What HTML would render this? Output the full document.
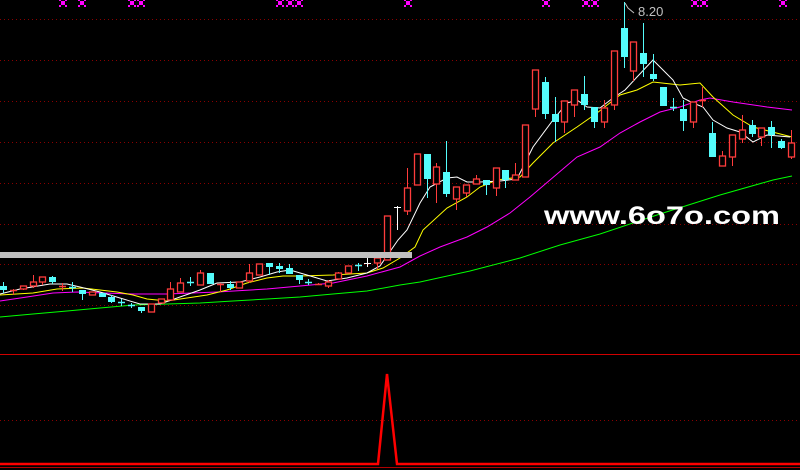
<!DOCTYPE html>
<html><head><meta charset="utf-8"><style>
html,body{margin:0;padding:0;background:#000;width:800px;height:470px;overflow:hidden}
svg{display:block}
</style></head><body>
<svg id="s" width="800" height="470" viewBox="0 0 800 470" xmlns="http://www.w3.org/2000/svg">
<rect width="800" height="470" fill="#000"/>
<g stroke="#8a0000" stroke-width="1" stroke-dasharray="1 3">
<line x1="0" y1="19.5" x2="800" y2="19.5"/>
<line x1="0" y1="60.5" x2="800" y2="60.5"/>
<line x1="0" y1="101.5" x2="800" y2="101.5"/>
<line x1="0" y1="142.5" x2="800" y2="142.5"/>
<line x1="0" y1="183.5" x2="800" y2="183.5"/>
<line x1="0" y1="224.5" x2="800" y2="224.5"/>
<line x1="0" y1="264.5" x2="800" y2="264.5"/>
<line x1="0" y1="305.5" x2="800" y2="305.5"/>
<line x1="0" y1="420.5" x2="800" y2="420.5"/>
</g>
<line x1="0" y1="354.5" x2="800" y2="354.5" stroke="#d00000"/>
<line x1="0" y1="467.5" x2="800" y2="467.5" stroke="#b00000"/>
<polyline points="0,464 378,464 387,374 397,464 800,464" fill="none" stroke="#ff0000" stroke-width="2.5"/>
<g id="lines" fill="none" stroke-width="1">
<polyline stroke="#00ff00" points="0,317 33,314 67,311 100,308 133,305 167,304 200,303 233,301 267,299 300,297 333,294 367,291 400,285 420,282 470,271 520,258 560,245 600,234 660,214 720,195 773,180 792,176"/>
<polyline stroke="#ff00ff" points="0,301 27,297 53,293 77,292 133,294 167,294 217,292 267,289 300,286 333,283 367,276 400,267 420,256 440,247 467,237 487,227 510,213 530,197 550,180 577,157 600,147 620,133 640,122 660,112 680,107 700,100 710,98 733,102 767,107 792,110"/>
<polyline stroke="#ffff00" points="0,295 33,293 57,289 83,288 117,292 133,295 147,299 167,301 187,298 207,295 227,290 247,283 267,278 283,276 300,276 333,275 367,273 383,268 400,258 415,247 423,230 447,208 467,197 480,187 497,180 520,177 533,163 553,143 577,127 597,113 620,95 637,90 653,82 680,85 700,83 713,97 733,115 753,127 792,137"/>
<polyline stroke="#ffffff" points="0,294 20,289 50,284 67,284 80,287 100,292 120,298 140,304 160,304 180,297 200,290 217,283 240,282 260,277 277,272 290,270 307,275 327,281 347,278 367,273 380,266 398,240 407,230 420,203 430,187 447,178 457,177 467,182 480,182 500,181 517,179 533,147 553,120 567,103 577,100 587,107 600,108 613,98 625,90 637,77 653,60 663,70 673,80 683,98 693,103 703,107 713,120 727,128 740,132 753,142 767,135 790,137"/>
</g>
<g id="c"></g>
<rect x="0" y="252" width="412" height="6" fill="#c0c0c0"/>
<g id="m" fill="#ff00ff"></g>
<polyline points="625,3 628,8 634,13" fill="none" stroke="#c0c0c0" stroke-width="1"/>
<text x="638" y="16" font-family="Liberation Sans, sans-serif" font-size="13" fill="#c0c0c0">8.20</text>
<text x="544" y="224" font-family="Liberation Sans, sans-serif" font-weight="bold" font-size="25" fill="#ffffff" textLength="236" lengthAdjust="spacingAndGlyphs">www.6o7o.com</text>
</svg>
<script>
var D=[
['c',286,290,282,293],['rx',290,290,289,295],['r',286,289,286,290],['r',282,286,275,288],['r',277,282,277,285],
['c',277,282,276,284],['rx',286,286,283,291],['cx',287,287,282,292],['c',290,294,290,300],['r',292,295,292,295],
['c',293,297,293,297],['c',297,302,295,303],['cx',302,302,299,306],['cx',305,305,303,308],['c',307,311,307,313],
['r',304,312,304,312],['r',299,303,299,303],['r',289,300,282,300],['r',283,292,278,292],['cx',282,282,277,286],
['r',273,285,270,285],['c',273,284,273,284],['rx',284,284,283,292],['c',284,288,281,290],['r',282,288,282,288],
['r',273,281,264,283],['r',264,275,264,275],['c',263,267,263,275],['c',266,269,263,273],['c',268,274,264,274],
['c',275,280,275,284],['cx',282,282,279,285],['rx',284,284,283,285],['r',282,286,280,288],['r',273,279,272,280],
['r',266,273,266,273],['cx',265,265,263,271],['wx',263,263,258,267],['r',258,263,258,269],['r',216,260,216,260],
['wx',207,207,206,230],['r',188,211,168,215],['r',154,185,154,185],['c',154,179,154,198],['r',167,184,163,203],
['c',172,194,141,197],['r',187,199,187,210],['r',185,193,185,197],['r',179,184,175,184],['c',180,185,180,195],
['r',168,188,168,196],['c',170,180,170,188],['r',175,180,163,180],['r',125,177,125,177],['r',70,109,70,117],
['c',82,114,77,119],['c',114,122,97,142],['r',101,122,101,133],['r',90,105,90,117],['c',94,105,76,110],
['c',107,122,107,128],['r',108,122,100,128],['r',51,105,51,110],['c',28,57,2,68],['r',42,71,42,81],
['c',53,64,23,77],['c',74,79,54,81],['c',87,106,87,106],['cx',107,107,98,111],['c',109,121,100,131],
['r',102,122,102,128],['rx',100,100,87,107],['c',133,157,122,157],['r',156,166,151,166],['r',135,157,135,166],
['r',130,139,115,143],['c',125,134,120,137],['r',128,137,128,146],['c',127,135,121,148],['c',141,148,139,149],
['r',143,157,130,159]];
var h='',R='#ff3c3c',C='#54fcfc';
for(var i=0;i<D.length;i++){var d=D[i],x=Math.round(3+9.85*i)+0.5,t=d[0];
var col=t[0]=='r'?R:(t[0]=='c'?C:'#ffffff');
if(d[3]<d[1])h+='<line x1="'+x+'" y1="'+d[3]+'" x2="'+x+'" y2="'+d[1]+'" stroke="'+col+'"/>';
if(d[4]>d[2])h+='<line x1="'+x+'" y1="'+d[2]+'" x2="'+x+'" y2="'+d[4]+'" stroke="'+col+'"/>';
if(t.length==2){h+='<line x1="'+(x-3.5)+'" y1="'+(d[1]+0.5)+'" x2="'+(x+3.5)+'" y2="'+(d[1]+0.5)+'" stroke="'+col+'" stroke-width="'+(t=='wx'?1:1.5)+'"/>';}
else if(t=='r'){h+='<rect x="'+(x-3)+'" y="'+d[1]+'" width="6" height="'+Math.max(1,d[2]-d[1])+'" fill="#000" stroke="'+R+'" stroke-width="1.3"/>';}
else{h+='<rect x="'+(x-3.5)+'" y="'+d[1]+'" width="7" height="'+Math.max(1,d[2]-d[1])+'" fill="'+C+'"/>';}
}
document.getElementById('c').innerHTML=h;
var M=[63,82,132,141,280,290,299,408,546,586,595,695,704,783],m='';
for(var j=0;j<M.length;j++){var a=M[j];m+='<rect x="'+(a-2)+'" y="1" width="4" height="4"/><rect x="'+(a-4)+'" y="-1" width="2" height="2"/><rect x="'+(a+2)+'" y="-1" width="2" height="2"/><rect x="'+(a-4)+'" y="5" width="2" height="2"/><rect x="'+(a+2)+'" y="5" width="2" height="2"/>';}
document.getElementById('m').innerHTML=m;
</script>
</body></html>
